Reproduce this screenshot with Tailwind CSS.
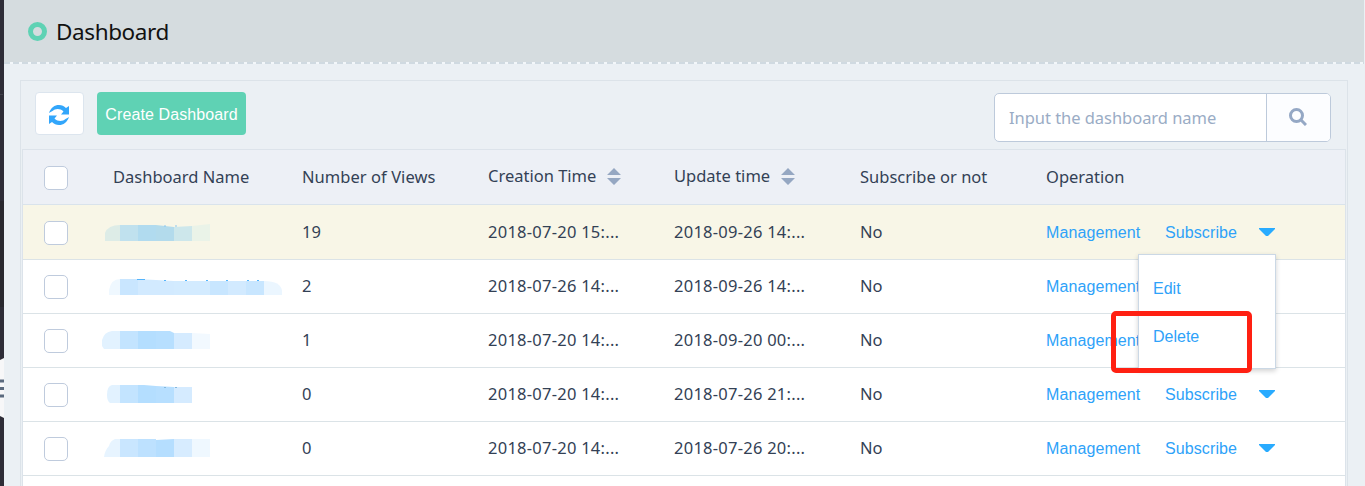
<!DOCTYPE html>
<html lang="en">
<head>
<meta charset="utf-8">
<title>Dashboard</title>
<script src="https://cdn.jsdelivr.net/npm/@tailwindcss/browser@4"></script>
</head>
<body class="relative flex h-[486px] w-[1365px] overflow-hidden bg-[#ebf0f4] font-['Noto_Sans','Open_Sans',sans-serif] text-[16.5px] leading-6 text-[#334155]">
  <aside class="h-full w-1 shrink-0">
    <svg class="block" width="4" height="486" viewBox="0 0 4 486">
      <rect width="4" height="486" fill="#2e2d37"/>
      <rect y="94" width="3" height="1" fill="#41414b"/>
      <rect y="201" width="4" height="106" fill="#29282e"/>
      <path d="M0 360L4 358V418L0 416Z" fill="#f7f7f8"/>
      <path d="M0 381H4M0 388.500H4M0 396H4" stroke="#5a6a7e" stroke-width="3"/>
    </svg>
  </aside>
  <main class="min-w-0 flex-1">
    <header class="flex h-[62px] w-[1360px] items-center gap-[9px] bg-[#d5dcdf] pl-6">
      <span class="size-[19px] rounded-full border-[5px] border-[#5fd2b4]"></span>
      <h1 class="whitespace-nowrap pt-0.5 text-[22.500px] leading-8 tracking-[-0.4px] text-[#111]">Dashboard</h1>
    </header>
    <svg class="block" width="1360" height="2"><path d="M0 1H1360" stroke="#f3f7fa" stroke-width="2"/><path d="M0 1H1360" stroke="#d0dae1" stroke-width="2" stroke-dasharray="6 3"/></svg>
    <section class="ml-4 mt-4 h-[420px] w-[1328px] border border-[#dce3e9] px-px">
      <div class="flex h-[68px] justify-between pl-[13px] pr-[15px]">
        <div class="flex gap-[13px] pt-[11px]">
          <button class="flex h-[43px] w-[49px] items-center justify-center rounded border border-[#dce5ee] bg-white">
            <svg width="20" height="20" viewBox="0 0 20 20" class="mr-0.5 mt-0.5" fill="#32a6fb"><path d="M0 8C2 2.500 5.500 0 10 0C13 0 15 1 17 3L20 1V9.500H12L14.500 6.500C11 3 6 3.500 3.500 6Q1.500 7 0 8Z"/><path d="M20 12C18 17.500 14.500 20 10 20C7 20 5 19 3 17L0 19V10.500H8L5.500 13.500C9 17 14 16.500 16.500 14Q18.500 13 20 12Z"/></svg>
          </button>
          <button class="h-[43px] w-[149px] whitespace-nowrap rounded bg-[#5fd2b4] pt-0.5 font-['Liberation_Sans',sans-serif] text-base tracking-[0.1px] text-white">Create Dashboard</button>
        </div>
        <div class="mt-3 flex h-[49px] w-[337px] overflow-hidden rounded-[5px] border border-[#bdcadb] bg-white text-[#9aacc5]">
          <div class="w-[272px] border-r border-[#bdcadb] pl-[14px] pt-3 tracking-[-0.04px]">Input the dashboard name</div>
          <div class="flex flex-1 items-start justify-center bg-[#fcfdff] pr-0.5 pt-[14px]">
            <svg width="18" height="18" viewBox="0 0 18 18" fill="none" stroke="#95a8c5" stroke-width="3"><circle cx="7.500" cy="7.500" r="6"/><path d="M11.800 11.800L17 17"/></svg>
          </div>
        </div>
      </div>
      <div class="h-[351px] w-[1324px] border-x border-t border-[#dce3ea] bg-white">
        <div class="grid h-[55px] grid-cols-[90px_188px_187px_186px_186px_186px_1fr] items-center whitespace-nowrap border-b border-[#d9e3ec] bg-[#edf0f6]">
          <i class="ml-[21px] mt-0.5 size-6 rounded-[5px] border border-[#bfcbdd] bg-white"></i>
          <span>Dashboard Name</span>
          <span class="pl-px tracking-[0.05px]">Number of Views</span>
          <span class="-mt-0.5 flex items-center gap-[11px]"><span>Creation Time</span><svg width="14" height="17" fill="#95a7c2"><path d="M0 7L7 0L14 7ZM0 10H14L7 17Z"/></svg></span>
          <span class="-mt-0.5 flex items-center gap-[11px]"><span>Update time</span><svg width="14" height="17" fill="#95a7c2"><path d="M0 7L7 0L14 7ZM0 10H14L7 17Z"/></svg></span>
          <span>Subscribe or not</span>
          <span>Operation</span>
        </div>
        <div class="grid h-[55px] grid-cols-[90px_188px_187px_186px_186px_186px_1fr] items-center whitespace-nowrap border-b border-[#dbe3e7] bg-[#f8f6e7]">
          <i class="ml-[21px] mt-0.5 size-6 rounded-[5px] border border-[#bfcbdd] bg-white"></i>
          <svg class="-ml-[13px]" width="185" height="22"><path d="M5 20V12Q8 4 20 4V20Z" fill="#ddece7"/><path d="M20 4h18v16H20z" fill="#c0e1ee"/><path d="M38 4h18v16H38z" fill="#b1dbef"/><path d="M56 4L74 6V20H56Z" fill="#b3dbec"/><path d="M74 6L92 5V20H74Z" fill="#cde7eb"/><path d="M92 5L110 3V20H92Z" fill="#eaf3e8"/><path d="M64 5h2M75 5h2" stroke="#8ac7ef"/></svg>
          <span class="pl-px">19</span><span class="tracking-[0.25px]">2018-07-20 15:...</span><span class="tracking-[0.25px]">2018-09-26 14:...</span><span>No</span>
          <span class="mt-px flex items-center font-['Liberation_Sans',sans-serif] text-base tracking-[0.1px] text-[#2ea2f9]"><span class="w-[119px] pt-px">Management</span><span class="w-[94px] pt-px">Subscribe</span><svg width="16" height="9" fill="#29abff"><path d="M0 0H16V1L9 8H7L0 1Z"/></svg></span>
        </div>
        <div class="grid h-[54px] grid-cols-[90px_188px_187px_186px_186px_186px_1fr] items-center whitespace-nowrap border-b border-[#dbe3e7] pb-0.5">
          <i class="ml-[21px] mt-0.5 size-6 rounded-[5px] border border-[#bfcbdd] bg-white"></i>
          <svg class="-ml-[13px]" width="185" height="22"><path d="M9 20V15Q11 4 20 4V20Z" fill="#eff8ff"/><path d="M20 4H38V20H20Z" fill="#c9e6ff"/><path d="M38 4L74 6V20H38Z" fill="#d2eaff"/><path d="M74 6h36v14H74z" fill="#d3ebff"/><path d="M110 6h18v14h-18z" fill="#c8e6ff"/><path d="M128 6h18v14h-18z" fill="#d2eaff"/><path d="M146 6h18v14h-18z" fill="#c8e6ff"/><path d="M164 6Q181 6 182 16V20H164Z" fill="#ebf6ff"/><path d="M37 4.500h8M64 5.500h2M85 5.500h2M106 5.500h2M126 5.500h2M147 5.500h2M157 5.500h2" stroke="#55b4fb"/></svg>
          <span class="pl-px">2</span><span class="tracking-[0.25px]">2018-07-26 14:...</span><span class="tracking-[0.25px]">2018-09-26 14:...</span><span>No</span>
          <span class="mt-0.5 font-['Liberation_Sans',sans-serif] text-base tracking-[0.1px] text-[#2ea2f9]">Management</span>
        </div>
        <div class="grid h-[54px] grid-cols-[90px_188px_187px_186px_186px_186px_1fr] items-center whitespace-nowrap border-b border-[#dbe3e7] pb-0.5">
          <i class="ml-[21px] mt-0.5 size-6 rounded-[5px] border border-[#bfcbdd] bg-white"></i>
          <svg class="-ml-[13px]" width="185" height="22"><path d="M4 20L2 17V11Q4 3 12 2H20V20Z" fill="#e2f2ff"/><path d="M20 2h18v18H20z" fill="#c3e4ff"/><path d="M38 2H56V20H38Z" fill="#b4deff"/><path d="M56 2H70L74 4V20H56Z" fill="#b7dfff"/><path d="M74 4H92V20H74Z" fill="#d5ebff"/><path d="M92 4L110 5V20H92Z" fill="#f2f9ff"/></svg>
          <span class="pl-px">1</span><span class="tracking-[0.25px]">2018-07-20 14:...</span><span class="tracking-[0.25px]">2018-09-20 00:...</span><span>No</span>
          <span class="mt-0.5 font-['Liberation_Sans',sans-serif] text-base tracking-[0.1px] text-[#2ea2f9]">Management</span>
        </div>
        <div class="grid h-[54px] grid-cols-[90px_188px_187px_186px_186px_186px_1fr] items-center whitespace-nowrap border-b border-[#dbe3e7] pb-0.5">
          <i class="ml-[21px] mt-0.5 size-6 rounded-[5px] border border-[#bfcbdd] bg-white"></i>
          <svg class="-ml-[13px]" width="185" height="22"><path d="M10 20Q7 18 7 12Q7 3 12 2H20V20Z" fill="#e2f2ff"/><path d="M20 2h18v18H20z" fill="#c3e4ff"/><path d="M38 2H44L56 3V20H38Z" fill="#b4deff"/><path d="M56 3L74 4V20H56Z" fill="#b7dfff"/><path d="M74 4H92V20H74Z" fill="#d5ebff"/><path d="M64 4.500h2M75 4.500h2" stroke="#82b8df"/></svg>
          <span class="pl-px">0</span><span class="tracking-[0.25px]">2018-07-20 14:...</span><span class="tracking-[0.25px]">2018-07-26 21:...</span><span>No</span>
          <span class="mt-0.5 flex items-center font-['Liberation_Sans',sans-serif] text-base tracking-[0.1px] text-[#2ea2f9]"><span class="w-[119px]">Management</span><span class="w-[94px]">Subscribe</span><svg width="16" height="9" fill="#29abff"><path d="M0 0H16V1L9 8H7L0 1Z"/></svg></span>
        </div>
        <div class="grid h-[54px] grid-cols-[90px_188px_187px_186px_186px_186px_1fr] items-center whitespace-nowrap border-b border-[#dbe3e7] pb-0.5">
          <i class="ml-[21px] mt-0.5 size-6 rounded-[5px] border border-[#bfcbdd] bg-white"></i>
          <svg class="-ml-[13px]" width="185" height="22"><path d="M4 20Q5 13 9 9Q10 4 15 2H20V20Z" fill="#e7f4ff"/><path d="M20 2h18v18H20z" fill="#c9e6ff"/><path d="M38 2h18v18H38z" fill="#bde1ff"/><path d="M56 3L74 2V20H56Z" fill="#b5deff"/><path d="M74 2H92V20H74Z" fill="#d7ecff"/><path d="M92 2H110V20H92Z" fill="#eff8ff"/></svg>
          <span class="pl-px">0</span><span class="tracking-[0.25px]">2018-07-20 14:...</span><span class="tracking-[0.25px]">2018-07-26 20:...</span><span>No</span>
          <span class="mt-0.5 flex items-center font-['Liberation_Sans',sans-serif] text-base tracking-[0.1px] text-[#2ea2f9]"><span class="w-[119px]">Management</span><span class="w-[94px]">Subscribe</span><svg width="16" height="9" fill="#29abff"><path d="M0 0H16V1L9 8H7L0 1Z"/></svg></span>
        </div>
      </div>
    </section>
  </main>
  <div class="absolute left-[1138px] top-[254px] flex h-[115px] w-[138px] flex-col gap-6 border border-[#cbd8e5] bg-white pl-[14px] pt-[22px] font-['Liberation_Sans',sans-serif] text-base text-[#2ea2f9] shadow-[0_2px_5px_rgba(0,0,0,0.18)]"><span>Edit</span><span>Delete</span></div>
  <div class="absolute left-[1111px] top-[311px] h-[62px] w-[141px] rounded-[5px] border-[5px] border-[#ff2012]"></div>
</body>
</html>
